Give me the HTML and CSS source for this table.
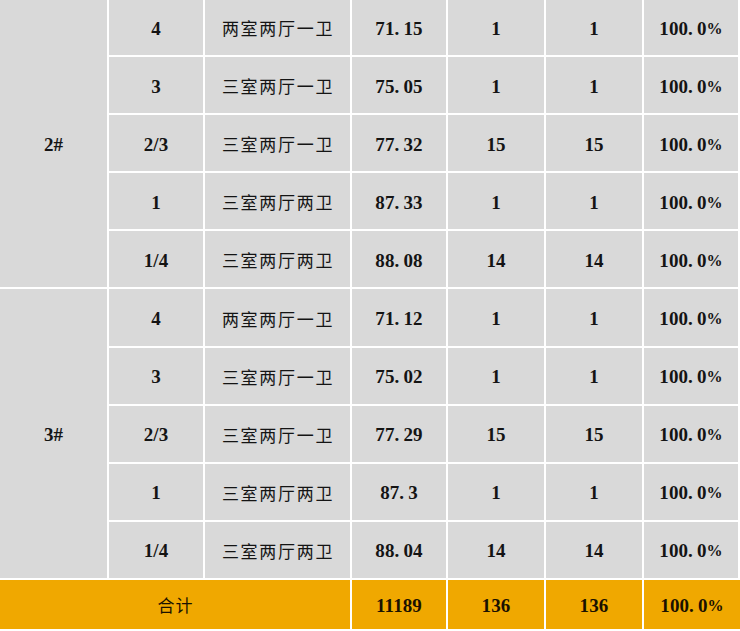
FILE: index.html
```html
<!DOCTYPE html>
<html lang="zh">
<head>
<meta charset="utf-8">
<link rel="stylesheet" href="styles.css">
</head>
<body>
<div class="table">
  <div class="cell num bld r1">2#</div>
  <div class="cell num">4</div><div class="cell cn">两室两厅一卫</div><div class="cell num">71<span class="dot">.</span>15</div><div class="cell num">1</div><div class="cell num">1</div><div class="cell num">100<span class="dot">.</span>0<span class="pct">%</span></div>
  <div class="cell num">3</div><div class="cell cn">三室两厅一卫</div><div class="cell num">75<span class="dot">.</span>05</div><div class="cell num">1</div><div class="cell num">1</div><div class="cell num">100<span class="dot">.</span>0<span class="pct">%</span></div>
  <div class="cell num">2/3</div><div class="cell cn">三室两厅一卫</div><div class="cell num">77<span class="dot">.</span>32</div><div class="cell num">15</div><div class="cell num">15</div><div class="cell num">100<span class="dot">.</span>0<span class="pct">%</span></div>
  <div class="cell num">1</div><div class="cell cn">三室两厅两卫</div><div class="cell num">87<span class="dot">.</span>33</div><div class="cell num">1</div><div class="cell num">1</div><div class="cell num">100<span class="dot">.</span>0<span class="pct">%</span></div>
  <div class="cell num">1/4</div><div class="cell cn">三室两厅两卫</div><div class="cell num">88<span class="dot">.</span>08</div><div class="cell num">14</div><div class="cell num">14</div><div class="cell num">100<span class="dot">.</span>0<span class="pct">%</span></div>
  <div class="cell num bld r2">3#</div>
  <div class="cell num">4</div><div class="cell cn">两室两厅一卫</div><div class="cell num">71<span class="dot">.</span>12</div><div class="cell num">1</div><div class="cell num">1</div><div class="cell num">100<span class="dot">.</span>0<span class="pct">%</span></div>
  <div class="cell num">3</div><div class="cell cn">三室两厅一卫</div><div class="cell num">75<span class="dot">.</span>02</div><div class="cell num">1</div><div class="cell num">1</div><div class="cell num">100<span class="dot">.</span>0<span class="pct">%</span></div>
  <div class="cell num">2/3</div><div class="cell cn">三室两厅一卫</div><div class="cell num">77<span class="dot">.</span>29</div><div class="cell num">15</div><div class="cell num">15</div><div class="cell num">100<span class="dot">.</span>0<span class="pct">%</span></div>
  <div class="cell num">1</div><div class="cell cn">三室两厅两卫</div><div class="cell num">87<span class="dot">.</span>3</div><div class="cell num">1</div><div class="cell num">1</div><div class="cell num">100<span class="dot">.</span>0<span class="pct">%</span></div>
  <div class="cell num">1/4</div><div class="cell cn">三室两厅两卫</div><div class="cell num">88<span class="dot">.</span>04</div><div class="cell num">14</div><div class="cell num">14</div><div class="cell num">100<span class="dot">.</span>0<span class="pct">%</span></div>
  <div class="cell total label cn">合计</div><div class="cell total num">11189</div><div class="cell total num">136</div><div class="cell total num">136</div><div class="cell total num">100<span class="dot">.</span>0<span class="pct">%</span></div>
</div>
</body>
</html>
```
FILE: styles.css
```css
html, body {
  margin: 0;
  padding: 0;
  background: #ffffff;
  overflow: hidden;
}
.table {
  display: grid;
  width: 740px;
  grid-template-columns: 107px 94px 145px 94px 96px 96px 94px;
  grid-template-rows: repeat(10, 56.1px) 49px;
  column-gap: 2px;
  row-gap: 2px;
  margin-top: -1px;
  background: #ffffff;
}
.cell {
  background: #d9d9d9;
  display: flex;
  align-items: center;
  justify-content: center;
  color: #141414;
  font-family: "Liberation Serif", "Noto Sans CJK SC", serif;
  font-weight: bold;
  font-size: 19px;
  white-space: nowrap;
}
.num {
  letter-spacing: 0.1px;
  padding-top: 3px;
}
.dot {
  margin-right: 4px;
}
.pct {
  font-size: 16px;
}
.cn {
  font-family: "Noto Sans CJK SC", sans-serif;
  font-weight: 400;
  font-size: 17px;
  letter-spacing: 1.7px;
  padding-left: 1px;
  padding-top: 1px;
}
.bld {
  grid-column: 1;
}
.r1 {
  grid-row: 1 / span 5;
}
.r2 {
  grid-row: 6 / span 5;
}
.total {
  background: #f0a800;
  color: #1a1100;
}
.label {
  grid-column: 1 / span 3;
  letter-spacing: 1px;
}
.table > .total:last-child {
  margin-right: -2px;
}
```
